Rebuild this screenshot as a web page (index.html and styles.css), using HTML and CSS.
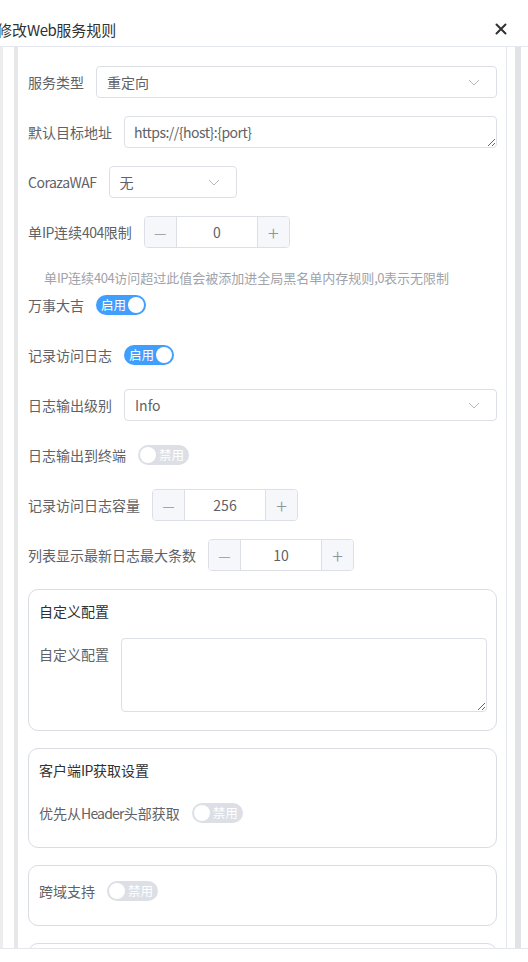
FILE: index.html
```html
<!DOCTYPE html>
<html lang="zh-CN">
<head>
<meta charset="utf-8">
<title>修改Web服务规则</title>
<link rel="stylesheet" href="styles.css">
</head>
<body>
<div class="header">
  <span class="title">修改<span class="lat">Web</span>服务规则</span>
  <span class="close"><svg width="12" height="12" viewBox="0 0 12 12"><path d="M1.5 1.5 L10.5 10.5 M10.5 1.5 L1.5 10.5" stroke="#303133" stroke-width="2" stroke-linecap="round"/></svg></span>
</div>
<div class="body">
  <div class="edge"></div>
  <div class="frame">
    <div class="card">
      <div class="row">
        <span class="lbl">服务类型</span>
        <div class="select grow"><span>重定向</span><svg class="chev" width="12" height="12" viewBox="0 0 12 12"><path d="M1 4 L6 9 L11 4" fill="none" stroke="#b4b7be" stroke-width="1"/></svg></div>
      </div>
      <div class="row">
        <span class="lbl">默认目标地址</span>
        <textarea class="ta grow lat" rows="1">https://{host}:{port}</textarea>
      </div>
      <div class="row">
        <span class="lbl"><span class="lat">CorazaWAF</span></span>
        <div class="select small"><span>无</span><svg class="chev" width="12" height="12" viewBox="0 0 12 12"><path d="M1 4 L6 9 L11 4" fill="none" stroke="#b4b7be" stroke-width="1"/></svg></div>
      </div>
      <div class="row">
        <span class="lbl">单<span class="lat">IP</span>连续<span class="lat">404</span>限制</span>
        <div class="num"><span class="btn minus">—</span><span class="val">0</span><span class="btn plus">+</span></div>
      </div>
      <div class="help">单<span class="lat">IP</span>连续<span class="lat">404</span>访问超过此值会被添加进全局黑名单内存规则<span class="lat">,0</span>表示无限制</div>
      <div class="row">
        <span class="lbl">万事大吉</span>
        <span class="sw on"><span class="swt">启用</span><span class="knob"></span></span>
      </div>
      <div class="row">
        <span class="lbl">记录访问日志</span>
        <span class="sw on"><span class="swt">启用</span><span class="knob"></span></span>
      </div>
      <div class="row">
        <span class="lbl">日志输出级别</span>
        <div class="select grow"><span>Info</span><svg class="chev" width="12" height="12" viewBox="0 0 12 12"><path d="M1 4 L6 9 L11 4" fill="none" stroke="#b4b7be" stroke-width="1"/></svg></div>
      </div>
      <div class="row">
        <span class="lbl">日志输出到终端</span>
        <span class="sw off"><span class="knob"></span><span class="swt">禁用</span></span>
      </div>
      <div class="row">
        <span class="lbl">记录访问日志容量</span>
        <div class="num"><span class="btn minus">—</span><span class="val">256</span><span class="btn plus">+</span></div>
      </div>
      <div class="row">
        <span class="lbl">列表显示最新日志最大条数</span>
        <div class="num"><span class="btn minus">—</span><span class="val">10</span><span class="btn plus">+</span></div>
      </div>

      <div class="group">
        <div class="gtitle">自定义配置</div>
        <div class="row">
          <span class="lbl">自定义配置</span>
          <textarea class="ta big grow" rows="3"></textarea>
        </div>
      </div>
      <div class="group">
        <div class="gtitle">客户端<span class="lat">IP</span>获取设置</div>
        <div class="row">
          <span class="lbl">优先从<span class="lat2">Header</span>头部获取</span>
          <span class="sw off"><span class="knob"></span><span class="swt">禁用</span></span>
        </div>
      </div>
      <div class="group notitle">
        <div class="row">
          <span class="lbl">跨域支持</span>
          <span class="sw off"><span class="knob"></span><span class="swt">禁用</span></span>
        </div>
      </div>
      <div class="group notitle">
        <div class="row">
          <span class="lbl">&nbsp;</span>
        </div>
      </div>
    </div>
  </div>
</div>
<div class="footer"></div>
</body>
</html>
```
FILE: styles.css
```css
* { box-sizing: border-box; }
html, body { margin: 0; padding: 0; }
body {
  width: 528px;
  height: 962px;
  overflow: hidden;
  background: #fff;
  font-family: "Noto Sans CJK SC", "Noto Sans", sans-serif;
  font-size: 14px;
  color: #606266;
}
.lat { letter-spacing: -0.5px; }
.lat2 { letter-spacing: -0.8px; }
.header {
  height: 47px;
  border-bottom: 1px solid #e4e7ed;
  display: flex;
  align-items: center;
  justify-content: space-between;
  padding: 12px 21px 0 0;
}
.title {
  font-size: 15px;
  color: #303133;
  margin-left: -3px;
}
.close { display: flex; }
.body {
  display: flex;
  height: 902px;
  overflow: hidden;
  border-bottom: 1px solid #e4e7ed;
}
.edge {
  width: 3px;
  background: #ededed;
  margin-right: 11px;
  flex: none;
}
.frame {
  width: 507px;
  flex: none;
  border-left: 3px solid #e6e7e9;
  border-right: 6px solid #e1e3e7;
  padding-right: 8px;
}
.card {
  border-left: 1px solid #e4e7ed;
  border-right: 1px solid #e4e7ed;
  padding: 19px 9px 0 10px;
  min-height: 100%;
}
.row {
  display: flex;
  align-items: flex-start;
  margin-bottom: 18px;
}
.lbl {
  flex: none;
  line-height: 32px;
  padding-right: 12px;
  white-space: nowrap;
}
.grow { flex: 1; min-width: 0; }
.select {
  height: 32px;
  border: 1px solid #dcdfe6;
  border-radius: 4px;
  display: flex;
  align-items: center;
  justify-content: space-between;
  padding: 0 16px 0 10px;
  color: #606266;
}
.select.small { width: 128px; }
.chev { flex: none; }
.ta {
  height: 32px;
  border: 1px solid #dcdfe6;
  border-radius: 4px;
  padding: 5px 9px;
  font-family: inherit;
  font-size: 14px;
  line-height: 20px;
  color: #606266;
  resize: vertical;
  outline: none;
}
.ta.lat { letter-spacing: -0.5px; }
.ta.big { height: 74px; }
.num {
  display: flex;
  width: 146px;
  height: 32px;
  border: 1px solid #dcdfe6;
  border-radius: 4px;
  overflow: hidden;
}
.num .btn {
  width: 32px;
  flex: none;
  background: #f5f7fa;
  display: flex;
  align-items: center;
  justify-content: center;
  color: #909399;
}
.num .minus { border-right: 1px solid #dcdfe6; font-size: 14px; font-weight: 300; }
.num .plus { border-left: 1px solid #dcdfe6; font-size: 20px; font-weight: 300; }
.num .val {
  flex: 1;
  text-align: center;
  line-height: 30px;
}
.help {
  padding-left: 16px;
  font-size: 13px;
  line-height: 23px;
  color: #a0a3aa;
}
.sw {
  align-self: center;
  display: flex;
  align-items: center;
  height: 20px;
  border-radius: 10px;
  padding: 2px;
  gap: 2px;
  font-size: 12.5px;
  color: #fff;
}
.sw.on { background: #409eff; padding-left: 5px; }
.sw.off { background: #dcdfe6; padding-right: 5px; gap: 3px; }
.swt { line-height: 16px; }
.knob {
  width: 16px;
  height: 16px;
  border-radius: 50%;
  background: #fff;
  flex: none;
}
.group {
  border: 1px solid #d9dce1;
  border-radius: 10px;
  padding: 10px 9px 0 10px;
  margin-bottom: 17px;
}
.group.notitle { padding-top: 9px; }
.gtitle {
  line-height: 22px;
  color: #303133;
  margin-bottom: 16px;
}
.footer { height: 14px; }
```
